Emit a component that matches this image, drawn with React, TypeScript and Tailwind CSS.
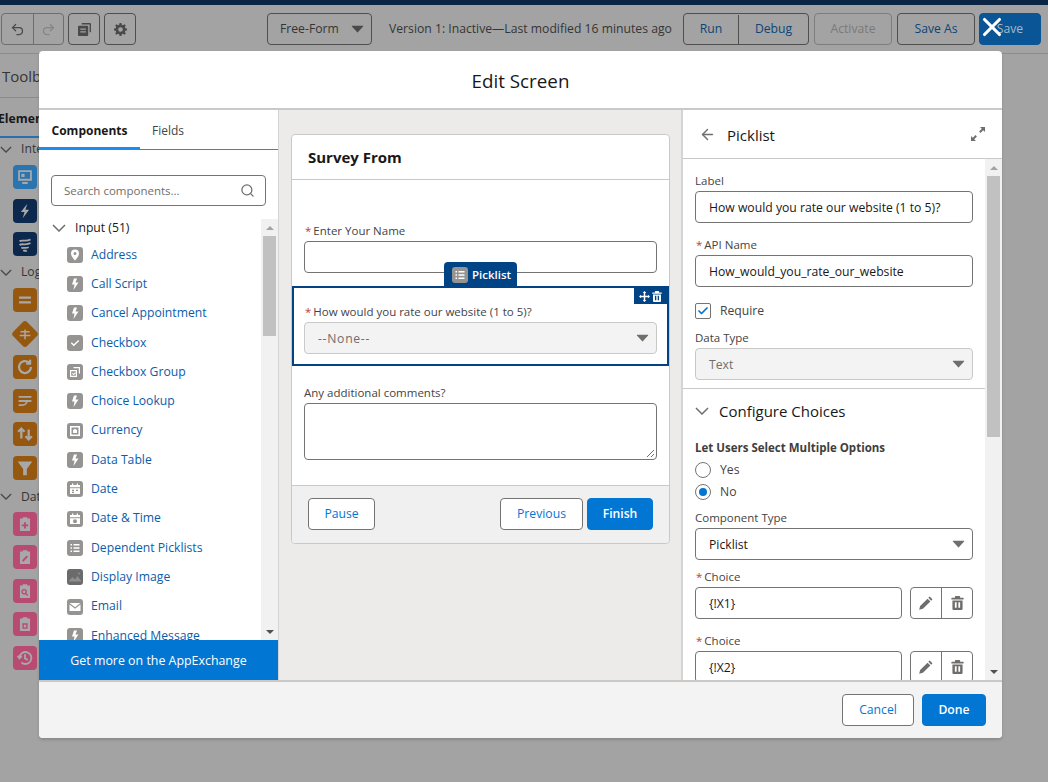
import { ReactNode } from "react";
import { Undo2, Redo2, ArrowLeft, Check, Search, X } from "lucide-react";

const font = "font-['Open_Sans','Noto_Sans',sans-serif]";

function Caret({ className = "fill-[#706e6b]" }: { className?: string }) {
  return (
    <svg viewBox="0 0 16 10" className={`h-[8px] w-[13px] ${className}`}>
      <path d="M1.500 1h13c.5 0 .8.5.5.9L8.400 9.200c-.2.3-.6.3-.8 0L1 1.900C.7 1.500 1 1 1.500 1z" />
    </svg>
  );
}

function Chevron({ className = "h-[8px] w-[14px] shrink-0 stroke-[#706e6b]" }: { className?: string }) {
  return (
    <svg viewBox="0 0 14 8" className={`fill-none stroke-[1.500] ${className}`}>
      <path d="M1 1l6 6 6-6" />
    </svg>
  );
}

function Trash({ className = "h-[14px] w-[13px] fill-[#706e6b]" }: { className?: string }) {
  return (
    <svg viewBox="0 0 14 16" className={className}>
      <path d="M5 0h4c.6 0 1 .4 1 1v1h3.300c.4 0 .7.300.7.700V4H0V2.700C0 2.300.3 2 .7 2H4V1c0-.6.4-1 1-1zM1.200 5h11.600v9.500c0 .8-.7 1.500-1.500 1.500H2.700c-.8 0-1.500-.7-1.500-1.500V5zm2.800 2v6.500h2V7H4zm4 0v6.500h2V7H8z" />
    </svg>
  );
}

function Pencil() {
  return (
    <svg viewBox="0 0 16 16" className="h-[14px] w-[14px] fill-[#706e6b]">
      <path d="M12.200.6l3.200 3.200-1.500 1.500-3.200-3.200zM9.800 3l3.200 3.200-8.500 8.500-4.300 1.100 1.100-4.300z" />
    </svg>
  );
}

// white glyphs inside the small grey component tiles
const glyphs: Record<string, ReactNode> = {
  pin: <path fillRule="evenodd" d="M8 2.500a4 4 0 0 0-4 4c0 2.700 3 6 4 7 1-1 4-4.300 4-7a4 4 0 0 0-4-4zm0 2.500a1.500 1.500 0 1 1 0 3 1.500 1.500 0 0 1 0-3z" />,
  bolt: <path d="M10 2.500H7L5 8.500h2.500l-1 5.500 5-7.500H8.500z" />,
  check: <path d="M3.800 8.200l1-1 2 2 4.400-4.300 1 1-5.400 5.400z" />,
  group: <path fillRule="evenodd" d="M6.500 3H13v6.500h-1.200V4.200H6.500zM3 6h7v7H3zm1.200 1.200v4.600h4.600V7.200zm.8 2.300l.7-.7 1 1 1.500-1.500.7.700-2.200 2.200z" />,
  currency: <path fillRule="evenodd" d="M3 3h10v10H3zm1.500 1.500v7h7v-7zM6 7l2-1.200L10 7v3H6z" />,
  date: <path fillRule="evenodd" d="M5 2.500h1.300V4h3.400V2.500H11V4h2v2.300H3V4h2zM3 7.200h10V13H3zm2 1.500v1.300h2V8.700zm4 0v1.300h2V8.700zM5 10.800V12h2v-1.200z" />,
  datetime: <path fillRule="evenodd" d="M5 2.500h1.300V4h3.400V2.500H11V4h2v2.300H3V4h2zM3 7.200h10V13H3zM8 8.200a2 2 0 1 0 0 4 2 2 0 0 0 0-4z" />,
  list: <path d="M3.500 4h1.500v1.500H3.500zm3 0h6v1.500h-6zm-3 3.200h1.500v1.500H3.500zm3 0h6v1.500h-6zm-3 3.300h1.500V12H3.500zm3 0h6V12h-6z" />,
  image: <path d="M1.500 12.500L5.500 8l2.500 2.500L10.500 7l4 5.500zM12 3.500a1 1 0 1 0 0 2 1 1 0 0 0 0-2z" className="fill-[#8f8f8f]" />,
  mail: <path d="M2.500 4h11L8 8.200zm0 1.500L8 9.700l5.500-4.200V12h-11z" />,
};

const components: [string, string][] = [
  ["Address", "pin"],
  ["Call Script", "bolt"],
  ["Cancel Appointment", "bolt"],
  ["Checkbox", "check"],
  ["Checkbox Group", "group"],
  ["Choice Lookup", "bolt"],
  ["Currency", "currency"],
  ["Data Table", "bolt"],
  ["Date", "date"],
  ["Date & Time", "datetime"],
  ["Dependent Picklists", "list"],
  ["Display Image", "image"],
  ["Email", "mail"],
  ["Enhanced Message", "bolt"],
];

function Tile({ glyph, className = "bg-[#969492]" }: { glyph: string; className?: string }) {
  return (
    <span className={`flex h-4 w-4 shrink-0 items-center justify-center rounded-[3px] ${className}`}>
      <svg viewBox="0 0 16 16" className="h-4 w-4 fill-white">
        {glyphs[glyph]}
      </svg>
    </span>
  );
}

function Scrollbar({ thumbHeight }: { thumbHeight: string }) {
  return (
    <div className="flex w-[17px] shrink-0 flex-col items-center bg-[#f1f1f1]">
      <div className="flex h-[17px] shrink-0 items-center justify-center">
        <span className="h-0 w-0 border-x-4 border-b-4 border-x-transparent border-b-[#a3a3a3]" />
      </div>
      <div className={`w-[13px] shrink-0 bg-[#c1c1c1] ${thumbHeight}`} />
      <div className="mt-auto flex h-[17px] shrink-0 items-center justify-center">
        <span className="h-0 w-0 border-x-4 border-t-4 border-x-transparent border-t-[#505050]" />
      </div>
    </div>
  );
}

function Field({ label, required, children, className = "" }: { label: string; required?: boolean; children: ReactNode; className?: string }) {
  return (
    <div className={className}>
      <div className="h-[19px] text-[11.500px] leading-[18px] text-[#444444]">
        {required && <span className="mr-[2px] ml-[1px] text-[#c23934]">*</span>}
        {label}
      </div>
      {children}
    </div>
  );
}

function Input({ value, className = "" }: { value?: string; className?: string }) {
  return (
    <div className={`flex h-[32px] items-center rounded-[4px] border border-[#747474] bg-white px-[13px] pt-[2px] text-[12.200px] text-[#181818] ${className}`}>
      {value}
    </div>
  );
}

function Select({ value, disabled, className = "" }: { value: string; disabled?: boolean; className?: string }) {
  return (
    <div className={`flex h-[32px] items-center justify-between rounded-[4px] border pr-[7px] pl-[13px] text-[12.200px] ${disabled ? "border-[#c9c9c9] bg-[#f3f3f3] text-[#706e6b]" : "border-[#747474] bg-white text-[#181818]"}`}>
      <span className={`pt-[2px] ${className}`}>{value}</span>
      <Caret />
    </div>
  );
}

function Choice({ value }: { value: string }) {
  return (
    <Field label="Choice" required className="mb-[13px]">
      <div className="flex gap-2">
        <Input value={value} className="w-[207px]" />
        <div className="flex h-[32px] w-[63px] rounded-[4px] border border-[#747474] bg-white">
          <span className="flex w-[31px] items-center justify-center border-r border-[#747474]">
            <Pencil />
          </span>
          <span className="flex flex-1 items-center justify-center">
            <Trash />
          </span>
        </div>
      </div>
    </Field>
  );
}

function Btn({ children, className = "" }: { children: ReactNode; className?: string }) {
  return (
    <div className={`flex h-[32px] items-center justify-center rounded-[4px] border pt-[1px] text-[12.200px] ${className}`}>
      {children}
    </div>
  );
}

function SideIcon({ className, children, diamond }: { className: string; children: ReactNode; diamond?: boolean }) {
  return (
    <div className="ml-[13px] flex h-[24px] w-[24px] items-center justify-center">
      <div className={`flex h-[24px] w-[24px] items-center justify-center rounded-[4px] ${className} ${diamond ? "scale-[0.83] rotate-45" : ""}`}>
        <svg viewBox="0 0 24 24" className={`h-[22px] w-[22px] fill-none stroke-[#a8a8a8] stroke-2 ${diamond ? "-rotate-45" : ""}`}>
          {children}
        </svg>
      </div>
    </div>
  );
}

function SideHeading({ children, className = "" }: { children: ReactNode; className?: string }) {
  return (
    <div className={`flex h-[22px] items-center gap-[9px] text-[12.200px] whitespace-nowrap text-[#353535] ${className}`}>
      <Chevron className="h-[7px] w-[12px] shrink-0 stroke-[#4a4a4a]" />
      {children}
    </div>
  );
}

function Background() {
  const blue = "bg-[#2a74b0]";
  const navy = "bg-[#0c294d]";
  const orange = "bg-[#96570f]";
  const pink = "bg-[#b84b72]";
  const clip = <path d="M6.500 6H17.500V19.500H6.500zM9.500 4.500h5V7h-5z" className="fill-[#a8a8a8] stroke-none" />;
  return (
    <div className="flex h-full flex-col">
      <div className="h-[5px] shrink-0 bg-[#0b2545]" />
      <div className="flex h-[49px] shrink-0 items-center border-b border-[#8c8c8c] pl-[1px] text-[12.200px] text-[#353535]">
        <div className="flex h-[32px] w-[63px] rounded-[4px] border border-[#6e6e6e]">
          <span className="flex w-8 items-center justify-center border-r border-[#6e6e6e]">
            <Undo2 size={15} className="text-[#4a4a4a]" />
          </span>
          <span className="flex flex-1 items-center justify-center">
            <Redo2 size={15} className="text-[#858585]" />
          </span>
        </div>
        <div className="ml-[4px] flex h-[32px] w-[32px] items-center justify-center rounded-[4px] border border-[#4f4f4f]">
          <svg viewBox="0 0 14 14" className="h-[13px] w-[13px] fill-[#4a4a4a]">
            <path d="M4 0h9c.6 0 1 .4 1 1v9h-1.500V1.500H4zM1 3h9c.6 0 1 .4 1 1v9c0 .6-.4 1-1 1H1c-.6 0-1-.4-1-1V4c0-.6.4-1 1-1zm1.500 3v1.300h6V6zm0 3v1.300h6V9z" />
          </svg>
        </div>
        <div className="ml-[4px] flex h-[32px] w-[32px] items-center justify-center rounded-[4px] border border-[#4f4f4f]">
          <svg viewBox="0 0 14 14" className="h-[13px] w-[13px] fill-[#4a4a4a]">
            <path fillRule="evenodd" d="M6 0h2l.4 1.800 1.300.5L11.300 1.300l1.400 1.400-1 1.600.5 1.300L14 6v2l-1.800.4-.5 1.300 1 1.600-1.400 1.400-1.600-1-1.300.5L8 14H6l-.4-1.800-1.300-.5-1.600 1-1.400-1.400 1-1.600-.5-1.300L0 8V6l1.800-.4.5-1.300-1-1.600 1.400-1.400 1.600 1 1.300-.5zM7 4.500a2.500 2.500 0 1 0 0 5 2.500 2.500 0 0 0 0-5z" />
          </svg>
        </div>
        <div className="ml-[131px] flex h-[32px] w-[105px] items-center justify-between rounded-[4px] border border-[#4f4f4f] pr-[7px] pl-[12px]">
          <span className="pt-[1px]">Free-Form</span>
          <Caret className="fill-[#4a4a4a]" />
        </div>
        <div className="ml-[17px] w-[294px] pt-[1px] whitespace-nowrap">Version 1: Inactive—Last modified 16 minutes ago</div>
        <div className="flex h-[32px] w-[126px] rounded-[4px] border border-[#4f4f4f] pt-[1px] text-[#0b4478]">
          <span className="flex w-[55px] items-center justify-center border-r border-[#4f4f4f]">Run</span>
          <span className="flex flex-1 items-center justify-center">Debug</span>
        </div>
        <Btn className="ml-[5px] w-[78px] border-[#7d7d7d] text-[#7a7a7a]">Activate</Btn>
        <Btn className="ml-[5px] w-[78px] border-[#4f4f4f] text-[#0b4478]">Save As</Btn>
        <Btn className="ml-[4px] w-[62px] border-[#0a5595] bg-[#0a5595] text-[#a9b8c6]">Save</Btn>
      </div>
      <div className="w-[100px] flex-1 overflow-hidden">
        <div className="flex h-[44px] items-center border-b border-[#8c8c8c] pt-[2px] pl-[2px] text-[15px] text-[#353535]">Toolbox</div>
        <div className="flex h-[40px] items-center border-b-[2px] border-[#2a6fb0] pt-[4px] text-[12.200px] font-bold whitespace-nowrap text-[#181818]">
          <span className="-ml-[2px]">Elements</span>
        </div>
        <SideHeading>Interaction</SideHeading>
        <div className="flex flex-col gap-[9.500px] pt-[5px]">
          <SideIcon className={blue}>
            <path d="M5.500 5.500h13v9.500h-13zM9 18.500h6" />
            <path d="M8 8.500h3.500v3.500H8z" className="fill-[#a8a8a8] stroke-none" />
          </SideIcon>
          <SideIcon className={navy}><path d="M14.500 4L7.500 13h4l-2 7 7-9.500h-4z" className="fill-[#a8a8a8] stroke-none" /></SideIcon>
          <SideIcon className={navy}><path d="M6 9c3-2 7 1 12-2M6 13c3-2 7 1 12-2M8 16.500c2-1 5 .5 8-1M10 19.500c1-.5 3 .3 4-.5" /></SideIcon>
        </div>
        <SideHeading className="mt-[5px]">Logic</SideHeading>
        <div className="flex flex-col gap-[9.600px] pt-[5px]">
          <SideIcon className={orange}><path d="M5.500 9.500h13M5.500 14.500h13" className="stroke-[2.500]" /></SideIcon>
          <SideIcon className={orange} diamond><path d="M6 9h12M5 14h14M12 6v13" /></SideIcon>
          <SideIcon className={orange}><path d="M18.500 12a6.500 6.500 0 1 1-2.200-4.800M17.500 4v4.200h-4.200" className="stroke-[2.500]" /></SideIcon>
          <SideIcon className={orange}><path d="M5 7.500h14M5 12h14M9 16.500c3 0 5-2 5-4.500M5 16.500h4" /></SideIcon>
          <SideIcon className={orange}><path d="M8 17V6M4.500 9.500L8 6l3.500 3.500M16 7v11M12.500 14.500L16 18l3.500-3.500" className="stroke-[2.500]" /></SideIcon>
          <SideIcon className={orange}><path d="M4 5h16l-6 8v7h-4v-7z" className="fill-[#a8a8a8] stroke-none" /></SideIcon>
        </div>
        <SideHeading className="mt-[6px]">Data</SideHeading>
        <div className="flex flex-col gap-[9.500px] pt-[4px]">
          <SideIcon className={pink}>{clip}<path d="M12 10v7M8.500 13.500h7" className="stroke-[#b84b72]" /></SideIcon>
          <SideIcon className={pink}>{clip}<path d="M9.500 16.500l5-5.500" className="stroke-[#b84b72]" /></SideIcon>
          <SideIcon className={pink}>{clip}<path d="M11 10.500a2.300 2.300 0 1 0 .1 0M13 15l2 2" className="stroke-[#b84b72] stroke-[1.500]" /></SideIcon>
          <SideIcon className={pink}>{clip}<path d="M9 12h6M10 12v4.500h4V12" className="stroke-[#b84b72] stroke-[1.500]" /></SideIcon>
          <SideIcon className={pink}><path d="M6 12a6.500 6.500 0 1 1 2 4.700M4 9.500l2 2.800 2.500-2.300M12 8v4.500l3 1.500" /></SideIcon>
        </div>
      </div>
    </div>
  );
}

function LeftPanel() {
  return (
    <div className="flex w-[239px] shrink-0 flex-col overflow-hidden bg-white">
      <div className="flex h-10 shrink-0 border-b border-[#747474] text-[12px]">
        <div className="-mb-px flex w-[101px] items-center justify-center border-b-[3px] border-[#1b8cf2] pt-[4px] font-bold text-[#181818]">Components</div>
        <div className="flex items-center pt-[2px] pl-[12px] text-[#444444]">Fields</div>
      </div>
      <div className="px-3 pt-[25px] pb-[13px]">
        <div className="flex h-[31px] w-[215px] items-center justify-between rounded-[4px] border border-[#747474] pr-[10px] pl-[12px] text-[11.500px] text-[#706e6b]">
          Search components...
          <Search size={15} strokeWidth={2} className="text-[#706e6b]" />
        </div>
      </div>
      <div className="flex min-h-0 flex-1">
        <div className="min-w-0 flex-1 overflow-hidden pl-[13px]">
          <div className="flex h-[18px] items-center gap-[9px] text-[12.200px] text-[#181818]">
            <Chevron />
            Input (51)
          </div>
          <div className="mt-[3px] flex flex-col pl-[15px]">
            {components.map(([name, glyph]) => (
              <div key={name} className="flex h-[29.330px] shrink-0 items-center gap-2 text-[12.200px] whitespace-nowrap text-[#0b5cab]">
                <Tile glyph={glyph} className={glyph === "image" ? "bg-[#6b6b6b]" : "bg-[#969492]"} />
                {name}
              </div>
            ))}
          </div>
        </div>
        <Scrollbar thumbHeight="h-[100px]" />
      </div>
      <div className="flex h-10 shrink-0 items-center justify-center bg-[#0176d3] pt-[2px] text-[12.400px] text-white">
        Get more on the AppExchange
      </div>
    </div>
  );
}

function Canvas() {
  return (
    <div className="flex-1 overflow-hidden border-x border-[#d4d4d4] bg-[#ecebea] pt-[24px] pr-[11px] pl-[12px]">
      <div className="rounded-[4px] border border-[#c9c9c9] bg-white">
        <div className="flex h-[45px] items-center border-b border-[#c9c9c9] pl-[16px] text-[15px] font-bold text-[#181818]">Survey From</div>
        <div className="px-[12px] pt-[42px]">
          <Field label="Enter Your Name" required>
            <Input />
          </Field>
        </div>
        <div className="relative mt-[13px] h-[80px] border-2 border-[#014486] px-[10px] pt-[15px]">
          <div className="absolute -top-[26px] left-[150px] flex h-[25px] w-[73px] items-center gap-[4px] rounded-t-[4px] bg-[#014486] pl-2 text-[11.500px] font-semibold text-white">
            <Tile glyph="list" />
            Picklist
          </div>
          <div className="absolute top-0 right-0 flex h-[16px] w-[33px] items-center justify-center gap-[2px] bg-[#014486]">
            <svg viewBox="0 0 12 12" className="h-[11px] w-[11px] fill-white">
              <path d="M6 0l2 2.200H6.800v3h3V4L12 6 9.800 8V6.800h-3v3H8L6 12 4 9.800h1.200v-3h-3V8L0 6l2.200-2v1.200h3v-3H4z" />
            </svg>
            <Trash className="h-[11px] w-[10px] fill-white" />
          </div>
          <Field label="How would you rate our website (1 to 5)?" required>
            <Select value="--None--" disabled className="tracking-[0.7px]" />
          </Field>
        </div>
        <div className="px-[12px] pt-[18px] pb-[25px]">
          <Field label="Any additional comments?">
            <div className="relative h-[57px] rounded-[4px] border border-[#747474] bg-white">
              <svg viewBox="0 0 10 10" className="absolute right-[1px] bottom-[1px] h-[10px] w-[10px] stroke-[#706e6b]">
                <path d="M9 2L2 9M9 6L6 9" />
              </svg>
            </div>
          </Field>
        </div>
        <div className="flex h-[58px] items-center justify-between rounded-b-[4px] border-t border-[#c9c9c9] bg-[#f0f0f0] px-[16px] pb-[1px]">
          <Btn className="w-[67px] border-[#747474] bg-white text-[#0176d3]">Pause</Btn>
          <div className="flex gap-1">
            <Btn className="w-[83px] border-[#747474] bg-white text-[#0176d3]">Previous</Btn>
            <Btn className="w-[66px] border-[#0176d3] bg-[#0176d3] font-semibold text-white">Finish</Btn>
          </div>
        </div>
      </div>
    </div>
  );
}

function RightPanel() {
  return (
    <div className="flex w-[320px] shrink-0 flex-col overflow-hidden border-l border-[#d4d4d4] bg-white">
      <div className="flex h-[49px] shrink-0 items-center border-b border-[#c9c9c9] pr-[17px] pl-[16px] text-[15px] text-[#181818]">
        <ArrowLeft size={17} className="text-[#706e6b]" />
        <span className="ml-[11px] pt-[2px]">Picklist</span>
        <svg viewBox="0 0 14 14" className="ml-auto h-[14px] w-[14px] fill-[#706e6b]">
          <path d="M9 0h5v5l-1.800-1.800-2.700 2.700-1.400-1.400 2.700-2.700zM5 14H0V9l1.800 1.800 2.700-2.700 1.400 1.400-2.700 2.700z" />
        </svg>
      </div>
      <div className="flex min-h-0 flex-1">
        <div className="min-w-0 flex-1 overflow-hidden">
          <div className="px-[12px] pt-[13px]">
            <Field label="Label">
              <Input value="How would you rate our website (1 to 5)?" />
            </Field>
            <Field label="API Name" required className="mt-[13px]">
              <Input value="How_would_you_rate_our_website" />
            </Field>
            <div className="mt-[16px] flex h-4 items-center gap-[9px] text-[12.200px] text-[#444444]">
              <span className="flex h-4 w-4 items-center justify-center rounded-[2px] border border-[#747474]">
                <Check size={12} strokeWidth={3.500} className="text-[#0176d3]" />
              </span>
              Require
            </div>
            <Field label="Data Type" className="mt-[10px]">
              <Select value="Text" disabled />
            </Field>
          </div>
          <div className="mt-[8px] border-t border-[#c9c9c9] px-[12px]">
            <div className="flex h-[46px] items-center gap-[10px] pb-[2px] text-[15px] text-[#181818]">
              <Chevron />
              Configure Choices
            </div>
            <div className="mt-[4px] h-[18px] text-[11.500px] leading-[18px] font-bold text-[#3e3e3c]">Let Users Select Multiple Options</div>
            <div className="mt-[2px] flex h-[22px] items-center gap-[9px] text-[12.200px] text-[#444444]">
              <span className="h-4 w-4 rounded-full border border-[#747474]" />
              Yes
            </div>
            <div className="flex h-[22px] items-center gap-[9px] text-[12.200px] text-[#444444]">
              <span className="flex h-4 w-4 items-center justify-center rounded-full border border-[#747474]">
                <span className="h-2 w-2 rounded-full bg-[#0176d3]" />
              </span>
              No
            </div>
            <Field label="Component Type" className="mt-[6px]">
              <Select value="Picklist" />
            </Field>
            <div className="mt-[8px]">
              <Choice value="{!X1}" />
              <Choice value="{!X2}" />
            </div>
          </div>
        </div>
        <Scrollbar thumbHeight="h-[261px]" />
      </div>
    </div>
  );
}

export default function App() {
  return (
    <div className={`relative h-[782px] w-[1048px] overflow-hidden bg-[#a3a3a3] ${font}`}>
      <Background />
      {/* Modal */}
      <div className="absolute top-[51px] left-[39px] flex h-[687px] w-[963px] flex-col overflow-hidden rounded-[4px] bg-white shadow-[0_2px_3px_rgba(0,0,0,0.16)]">
        <div className="flex h-[59px] shrink-0 items-center justify-center border-b-2 border-[#c9c9c9] pt-[4px] text-[18.800px] text-[#181818]">Edit Screen</div>
        <div className="flex min-h-0 flex-1">
          <LeftPanel />
          <Canvas />
          <RightPanel />
        </div>
        <div className="flex h-[58px] shrink-0 items-center justify-end gap-2 border-t-2 border-[#c9c9c9] bg-[#f3f3f3] pr-[16px]">
          <Btn className="w-[72px] border-[#747474] bg-white text-[#0176d3]">Cancel</Btn>
          <Btn className="w-[64px] border-[#0176d3] bg-[#0176d3] font-semibold text-white">Done</Btn>
        </div>
      </div>
      {/* Close button over the Save button */}
      <X size={30} strokeWidth={2.500} className="absolute top-[12px] left-[977px] text-white" />
    </div>
  );
}
